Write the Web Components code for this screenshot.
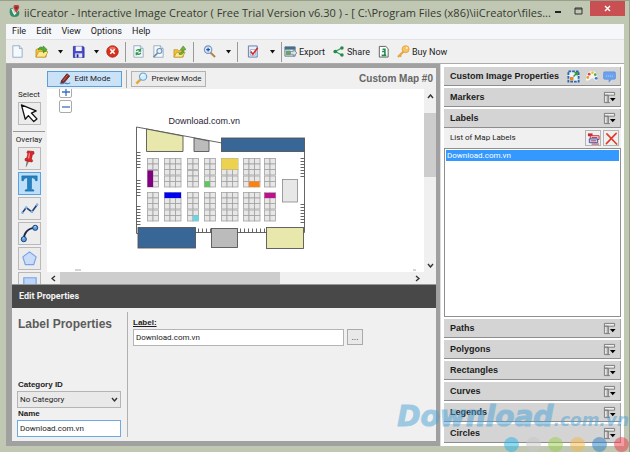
<!DOCTYPE html>
<html lang="en">
<head>
<meta charset="utf-8">
<title>iiCreator</title>
<style>
html,body{margin:0;height:100%;overflow:hidden}
body{font:9px/12px Roboto,"Liberation Sans",sans-serif;color:#1c1c1c;background:#c0c8b4}
</style>
</head>
<body>
<app-window></app-window>
<script>
const BASE = `<style>
*{box-sizing:border-box}
button,input,select{font:inherit;color:inherit;margin:0;padding:0;border:0;background:none}
svg{display:block;flex:none}
</style>`;
function define(name, html, setup) {
  const t = document.createElement('template');
  t.innerHTML = BASE + html;
  customElements.define(name, class extends HTMLElement {
    constructor() {
      super();
      this.attachShadow({mode: 'open'}).append(t.content.cloneNode(true));
    }
    connectedCallback() { if (setup) setup(this, this.shadowRoot); }
  });
}

const page = '<path d="M2 .8h7l3 3v9.4H2z" fill="#f4f9fe" stroke="#8ba4bd" stroke-width=".9"/><path d="M9 .8v3h3" fill="#d4e4f2" stroke="#8ba4bd" stroke-width=".8"/>';
const ICONS = {
  logo: ['0 0 12 14', '<path d="M1.5 3.5C0 7 .5 13 6 13s6-4 4.500-7L8.500 8C8.500 10 4.500 11 4 8S5 4 4 3z" fill="#2f8f68"/><path d="M3 4l3 6 4-5" stroke="#e8f4ec" fill="none" stroke-width="1.300"/><path d="M8 9L5.500 4a3 3 0 115 0z" fill="#bf3a38"/><circle cx="8" cy="3" r="1.200" fill="#6d2a2d"/>'],
  new: ['0 0 14 14', page],
  open: ['0 0 14 14', '<path d="M1 5l2-1h3l1 1h5v8H1z" fill="#f0c23c" stroke="#b38a1e" stroke-width=".7"/><path d="M1 13l3-6h10l-3 6z" fill="#ffe98a" stroke="#b38a1e" stroke-width=".7"/><path d="M3.500 5C4 2 7 1.500 9 3V1l4 4-4 3.500V6C7 4.500 5 4.500 3.500 5z" fill="#4fb037" stroke="#23781a" stroke-width=".6"/>'],
  save: ['0 0 14 14', '<path d="M1.500 1.500h10l1.500 1v11H1.500z" fill="#4c4cc8" stroke="#26268c" stroke-width=".8"/><path d="M4 1.500h6.500v5H4z" fill="#f2f4ff"/><path d="M3.500 9h7.500v4.500H3.500z" fill="#e2e6fa"/><path d="M5 10h2v3.500H5z" fill="#2a2a96"/>'],
  stop: ['0 0 14 14', '<circle cx="7" cy="7" r="6.200" fill="#d9301c" stroke="#a31c10" stroke-width=".8"/><path d="M3 4a5 5 0 018 0q-4 2-8 0" fill="#f28c70" opacity=".7"/><path d="M4.600 4.600l4.800 4.800m0-4.800L4.600 9.400" stroke="#fff" stroke-width="1.700"/>'],
  refresh: ['0 0 14 14', page + '<path d="M4.500 6.500c1-2 3.500-2 4.500-.500M9.200 4v2.500H7M9.500 8.500c-1 2-3.500 2-4.500.5M4.600 11V8.500H7" fill="none" stroke="#2c9a46" stroke-width="1.400"/>'],
  find: ['0 0 14 14', page + '<circle cx="8" cy="6.500" r="2.700" fill="#e2f1ff" stroke="#7590ad" stroke-width="1.200"/><path d="M6 8.800L1.500 13" stroke="#7089a5" stroke-width="1.700"/>'],
  folder: ['0 0 14 14', '<path d="M1 5h4l1 1h5v7H1z" fill="#f0c23c" stroke="#b38a1e" stroke-width=".7"/><path d="M1 13l3-5h9l-3 5z" fill="#ffe98a" stroke="#b38a1e" stroke-width=".7"/><path d="M6.500 9C9 9 10 7.500 10 5H8l3-4 3 4h-2c0 4-2 6-5.500 5z" fill="#72b834" stroke="#3d7a1d" stroke-width=".6"/>'],
  zoom: ['0 0 14 14', '<path d="M8 8l5 5" stroke="#b98346" stroke-width="2.200"/><circle cx="5.500" cy="5" r="4" fill="#d4ebff" stroke="#7797c0" stroke-width="1.200"/><path d="M3.500 5h4m-2-2v4" stroke="#2a4f9e" stroke-width="1.300"/>'],
  check: ['0 0 14 14', '<path d="M1.500 1h9.500v12H1.500z" fill="#e9f0fb" stroke="#5d79ad" stroke-width="1"/><path d="M3.500 5h5.500v6H3.500z" fill="#fff" stroke="#8a9abf" stroke-width=".8"/><path d="M4 7l2.300 3L11.500 3" fill="none" stroke="#d42a20" stroke-width="1.700"/>'],
  export: ['0 0 14 14', '<path d="M1 2h11v10H1z" fill="#e8f0f2" stroke="#4b6a7a" stroke-width=".9"/><path d="M1 2h11v3H1z" fill="#416f8c"/><path d="M2 6h5v5H2z" fill="#6f9f70"/><path d="M7 7h3V5l4 3.500-4 3.500v-2H7z" fill="#dce4ea" stroke="#5a7180" stroke-width=".7"/>'],
  share: ['0 0 14 14', '<path d="M11 3L3.500 7l7.500 4" fill="none" stroke="#2d9a57" stroke-width="1.200"/><circle cx="3.500" cy="7" r="2" fill="#228a4b"/><circle cx="10.700" cy="3.300" r="1.900" fill="#228a4b"/><circle cx="10.700" cy="10.700" r="1.900" fill="#228a4b"/>'],
  stats: ['0 0 14 14', '<path d="M2.500 1.500h7l2.500 2.500v9H2.500z" fill="#fff" stroke="#555e58" stroke-width="1"/><path d="M6 4.500h2.500v6.500M5 11.200h5M5.500 7h3" stroke="#228a4b" stroke-width="1.700" fill="none"/>'],
  key: ['0 0 14 14', '<path d="M7 7l-6 6m2-2l1.500 1.500" stroke="#e3a545" stroke-width="2.200"/><circle cx="9.300" cy="4.500" r="3.800" fill="#f7c262" stroke="#e09b34" stroke-width=".8"/><circle cx="10.500" cy="3.300" r="1.100" fill="#fff4dc"/>'],
  pencil: ['0 0 14 14', '<path d="M2.500 9.500l6-7.500 3 2.200-6 7.300-3.500 1z" fill="#8c2c22" stroke="#4c1812" stroke-width=".8"/><path d="M4.500 9.500l5-6.500" stroke="#d4685a"/><path d="M1 12c3 2 4-1 6 0s3 1 5-.5" stroke="#4f84c4" stroke-width="1.300" fill="none"/>'],
  preview: ['0 0 14 14', '<path d="M6 8L1.500 12.500" stroke="#e4a934" stroke-width="2.600"/><circle cx="8.700" cy="5" r="3.900" fill="#d3edff" stroke="#6aa1d2" stroke-width="1.200"/><path d="M6.500 4.500Q7.500 2.500 9.500 3" stroke="#fff" fill="none"/>'],
  cursor: ['0 0 20 20', '<path d="M1.500 1l4 15 3.300-3.800 5.700 6.300 3.300-2.800-5.800-6.200 5-2.200z" fill="#fff" stroke="#111" stroke-width="1.400" stroke-linejoin="round"/>'],
  pin: ['0 0 20 20', '<path d="M7.500 12l-1 6.500L9.500 12z" fill="#8a8a8a" stroke="#666" stroke-width=".6"/><path d="M8 2l6.500.7.3 2.300-1.800 1-1 4.500 1.300 1.500-.6 1.700-7.200-1.400-.2-2 2-1 1-4.300-1-1.300z" fill="#d8262a" stroke="#a3181c" stroke-width=".7"/><path d="M10 4.500l-1 5.500" stroke="#ff9187" stroke-width="1.300"/>'],
  text: ['0 0 20 20', '<path d="M2 2h16v5h-1.500Q16 4.200 13.500 4H12v11.500q0 1.200 2.500 1.300V18h-9v-1.200Q8 16.700 8 15.500V4H6.500Q4 4.200 3.500 7H2z" fill="#2583c4" stroke="#17639e" stroke-width=".7"/>'],
  line: ['0 0 20 20', '<path d="M2.500 14.500L6.500 9l6 4.500 5.500-7.500" fill="none" stroke="#263d70" stroke-width="1.700"/><g fill="#79b8ef"><circle cx="2.500" cy="14.500" r="1.400"/><circle cx="6.500" cy="9" r="1.400"/><circle cx="12.500" cy="13.500" r="1.400"/><circle cx="18" cy="6" r="1.400"/></g>'],
  curve: ['0 0 20 20', '<path d="M4 16C4 10 8 4 16 4" fill="none" stroke="#18244c" stroke-width="1.800"/><g fill="#5c9fdf" stroke="#173b72" stroke-width="1"><circle cx="4" cy="16" r="2.700"/><circle cx="16" cy="4" r="2.700"/></g><path d="M3 15.300q.7-1 1.500-.5M15 3.300q.7-1 1.500-.5" stroke="#d9efff" fill="none"/>'],
  polygon: ['0 0 20 20', '<path d="M10 3l7 5.300-2.600 8.200H5.600L3 8.300z" fill="#c9dcfa" stroke="#7aa2e4" stroke-width="1.200"/>'],
  rect: ['0 0 20 20', '<path d="M4 4h13v12H4z" fill="#bcd5fa" stroke="#7aa2e4" stroke-width="1.200"/>'],
  grid: ['0 0 14 14', '<path d="M1.500 1.500h11v3h-11zM1.500 4.500h4v8h-4zM5.500 4.500v8h2" fill="#eee" stroke="#777" stroke-width="1"/><path d="M3.500 5v7" stroke="#999" stroke-dasharray="1 1"/><path d="M7.500 7.500h6L10.500 11z" fill="#000"/>'],
  resize: ['0 0 14 14', '<path d="M1.500 1.500h11v11h-11z" fill="#eaf4ff" stroke="#2a66ad" stroke-width="2" stroke-dasharray="3 1"/><path d="M3 7.500h4v4H3z" fill="#e88a2c"/><path d="M7 7l3.500-3.500M8 3h3v3" stroke="#3a9a42" stroke-width="1.600" fill="none"/>'],
  palette: ['0 0 14 14', '<path d="M1 11C1 4 4 1 8 1s6 4 5 10c-2 2-3-2-5-2s-4 4-7 2z" fill="#f7f5f2"/><g><circle cx="3" cy="8" r="1.500" fill="#ea9a2a"/><circle cx="4.500" cy="4.500" r="1.500" fill="#d84a34"/><circle cx="8" cy="2.800" r="1.400" fill="#e2c83a"/><circle cx="11" cy="5" r="1.400" fill="#50a84c"/><circle cx="12" cy="9" r="1.500" fill="#3d78d0"/></g>'],
  chat: ['0 0 14 14', '<path d="M2 2h10q1.500 0 1.500 1.500v5q0 1.500-1.500 1.500H9l-2.500 3V10H2Q.5 10 .5 8.500v-5Q.5 2 2 2z" fill="#6ba1ec" stroke="#5388da" stroke-width=".6"/><path d="M3.500 6.500h7" stroke="#c3dbfa" stroke-dasharray="1 1"/>'],
  rename: ['0 0 14 14', '<path d="M1 1.500h5v3H1z" fill="#c82a34"/><path d="M3.500 4h9.500v4H3.500z" fill="#f4dce4" stroke="#ba2b3d"/><path d="M2.500 7.500h9v4h-9z" fill="#dae4fb" stroke="#394a9a"/><path d="M5 6h6M4 9.500h6M5 13h8" stroke="#b92b3b"/>'],
  remove: ['0 0 14 14', '<path d="M2 2l10.500 11M12 1.500L1.500 12.500" stroke="#e03a28" stroke-width="1.700" stroke-linecap="round"/>'],
};
const icon = (n, s) => `<svg width="${s}" height="${s}" viewBox="${ICONS[n][0]}" aria-hidden="true">${ICONS[n][1]}</svg>`;

define('app-icon', `<style>:host{display:block;flex:none}</style><span></span>`, (h, r) => {
  r.querySelector('span').innerHTML = icon(h.getAttribute('name'), h.getAttribute('size') || 12);
});

define('title-bar', `<style>
:host{display:flex;align-items:flex-start;height:23px;padding:0 0 0 8px;font:11px/23px "Open Sans","Noto Sans",sans-serif;color:#37392f}
app-icon{padding-top:4px;margin-right:3px}
h1{font:inherit;margin:0;flex:1;min-width:0;white-space:nowrap}
.b{display:flex}
button{width:20px;height:19px;display:grid;place-items:center}
.close{background:#c84f52;width:35px;height:15px;margin:0 0 0 2px}
</style>
<app-icon name="logo" size="13"></app-icon><h1><slot></slot></h1>
<div class="b"><button aria-label="Minimize"><svg width="8" height="8"><path d="M1 5h6" stroke="#222" stroke-width="2"/></svg></button>
<button aria-label="Maximize"><svg width="9" height="8"><path d="M1 1h7v6H1zM1 2h7" fill="none" stroke="#333"/></svg></button>
<button class="close" aria-label="Close"><svg width="7" height="7"><path d="M1 1l5 5m0-5L1 6" stroke="#fff" stroke-width="1.400"/></svg></button></div>`);

define('menu-bar', `<style>
:host{display:block;background:#f6f7fa;border-bottom:1px solid #e2e2e4}
nav{display:flex;gap:10px;padding:0 6px;height:15px}
button{line-height:15px}
</style><nav><button>File</button><button>Edit</button><button>View</button><button>Options</button><button>Help</button></nav>`);

define('tool-item', `<style>
:host{display:block;flex:none;width:20px}
:host([w=m]){width:22px}:host([w=l]){width:24px}:host([w=xl]){width:26px}:host([text]){width:auto}
button{width:100%;height:22px;display:flex;align-items:center;justify-content:center;gap:2px;white-space:nowrap}
</style><button><span></span><slot></slot></button>`, (h, r) => {
  r.querySelector('span').innerHTML = icon(h.getAttribute('icon'), 13);
  r.querySelector('button').setAttribute('aria-label', h.textContent || h.getAttribute('icon'));
});
define('tool-caret', `<style>:host{display:block;flex:none;width:12px}button{width:12px;height:22px;display:grid;place-items:center}</style>
<button aria-label="More"><svg width="5" height="4"><path d="M0 0h5L2.500 3.500z" fill="#111"/></svg></button>`);
define('tool-sep', `<style>:host{display:block;flex:none;width:6px;height:20px}i{display:block;width:1px;height:100%;margin:auto;background:#9a9a9a}</style><i></i>`);

define('tool-bar', `<style>:host{display:flex;align-items:center;height:23px;background:#f0f0f0}
.t{display:flex;gap:7px}</style>
<tool-item w="m" icon="new"></tool-item><tool-item w="xl" icon="open"></tool-item><tool-caret></tool-caret>
<tool-item w="l" icon="save"></tool-item><tool-caret></tool-caret><tool-item icon="stop"></tool-item><tool-sep></tool-sep>
<tool-item icon="refresh"></tool-item><tool-item icon="find"></tool-item><tool-item w="m" icon="folder"></tool-item><tool-sep></tool-sep>
<tool-item w="xl" icon="zoom"></tool-item><tool-caret></tool-caret><tool-sep></tool-sep>
<tool-item w="xl" icon="check"></tool-item><tool-caret></tool-caret><tool-sep></tool-sep>
<div class="t"><tool-item text icon="export">Export</tool-item><tool-item text icon="share">Share</tool-item><tool-item text icon="stats"></tool-item><tool-item text icon="key">Buy Now</tool-item></div>`);

define('mode-bar', `<style>
:host{display:flex;align-items:center;height:21px;padding:0 3px 0 35px;background:#f0f0f0}
button{width:75px;height:16px;font-size:8px;border:1px solid #b2b2b2;background:#ebebeb;display:flex;align-items:center;justify-content:center;gap:3px;white-space:nowrap}
button.on{background:#c9e2f8;border-color:#5b9fd8}
i{width:1px;height:18px;margin:0 4px;background:#aaa}
h2{margin:0 0 0 auto;font:bold 10px/14px "Liberation Sans",Arial,sans-serif;color:#666}
</style><button class="on" aria-pressed="true">${icon('pencil', 13)}Edit Mode</button><i></i><button>${icon('preview', 13)}Preview Mode</button><h2>Custom Map #0</h2>`);

define('tool-palette', `<style>
:host{display:flex;flex-direction:column;align-items:center;gap:2px;width:35px;padding:1px 1px 0 0;background:#f0f0f0;overflow:hidden;flex:none;contain:size;font-size:8px;line-height:10px}
button{width:23px;height:23px;flex:none;display:grid;place-items:center;border:1px solid #b9b9b9;background:#ececec}
button.on{background:#bddffa;border-color:#5aa3e0}
hr{width:32px;margin:4px 0 1px;border:0;border-top:1px solid #999}
span{flex:none}
</style><span>Select</span><button aria-label="Select">${icon('cursor', 19)}</button><hr><span>Overlay</span>
${[['pin','Marker'],['text','Label'],['line','Path'],['curve','Curve'],['polygon','Polygon'],['rect','Rectangle']].map(([n, l]) => `<button aria-label="${l}"${n === 'text' ? ' class="on"' : ''}>${icon(n, 19)}</button>`).join('')}`);

/* Floor plan of the exhibition hall, in canvas coordinates. */
function floorPlan() {
  const cols = [[147.5,2],[164.5,3],[187.5,2],[204.5,2],[221.5,3],[243.5,3],[264.5,2]];
  const c = 5.5;
  let s = '<g fill="#e7e7e7" stroke="#a2a2a2" stroke-width=".8">';
  cols.forEach(([x, n], i) => {
    const topRows = (i === 0 || i === 2) ? [158.5,164,170.500,176,181.500] : [158.5,164,169.500,176,181.500];
    const low = [192.500,198,203.500,210,215.500];
    [...topRows, ...low].forEach(y => { for (let k = 0; k < n; k++) s += `<rect x="${x + k * c}" y="${y}" width="${c}" height="${c}"/>`; });
  });
  s += '<rect x="282.500" y="179.500" width="15" height="22.500" stroke="#888"/></g>';
  [[147.5,170.5,5.5,16.5,'#800080'],[204.5,181.5,5.5,5.5,'#62c462'],[221.5,158.5,16.5,11,'#ecd24e'],[249,181.5,10.5,5.5,'#fb8110'],
   [164.5,192.5,16.5,5.5,'#0000f0'],[193,215.5,5.5,5.5,'#6ad4e4'],[264.5,193,11,5,'#c0108c']]
    .forEach(([x, y, w, h, f]) => s += `<rect x="${x}" y="${y}" width="${w}" height="${h}" fill="${f}"/>`);
  let t = '';
  [[152,168],[180,197],[206,224]].forEach(([a, b]) => { for (let y = a; y <= b; y += 3) t += `M136.500 ${y + .5}h4`; });
  [[158,176],[204,222]].forEach(([a, b]) => { for (let y = a; y <= b; y += 3) t += `M304.500 ${y + .5}h-4`; });
  [[198,210],[240,264]].forEach(([a, b]) => { for (let x = a; x <= b; x += 4) t += `M${x + .5} 232.500v-4`; });
  s += `<path d="${t}M222 143L136.500 127v106.500H138M195 232.500h109.500V151" fill="none" stroke="#555" stroke-width=".9"/>
  <g stroke="#555" stroke-width=".9"><path d="M146.500 129l36.500 7v15.500h-36.500z" fill="#e8e8ac"/><path d="M194 138l15 3v10.500h-15z" fill="#bbb"/>
  <rect x="221.500" y="138" width="83" height="13.500" fill="#386797"/><rect x="138" y="227.500" width="57.500" height="20.500" fill="#386797"/>
  <rect x="211.500" y="228.500" width="26" height="19" fill="#bbb"/><rect x="266.500" y="227.500" width="37" height="21" fill="#e8e8ac"/></g>`;
  return s;
}
define('map-canvas', `<style>
:host{display:grid;grid-template:minmax(0,1fr) 12px/minmax(0,1fr) 12px;flex:1;min-width:0;background:#f0f0f0}
.v{position:relative;background:#fff;overflow:hidden}
.z{position:absolute;left:12px;top:-4px;display:grid;gap:2px}
.z button{width:13px;height:13px;border:1px solid #aaa;border-radius:2px;background:#fff;display:grid;place-items:center}
.sb{display:flex;flex-direction:column;align-items:center}
.sb b{flex:0 0 64px;width:100%;background:#cdcdcd}
.sb i{flex:0 0 24px;display:grid;place-items:start center;padding-top:5px}
.sb i:last-child{margin-top:auto;flex-basis:14px}
.hb{display:flex;align-items:center}
.hb i{flex:0 0 13px;display:grid;place-items:center}
.hb b{flex:0 1 220px;height:100%;background:#cdcdcd}
.hb i:last-child{margin-left:auto}
</style>
<div class="v"><svg width="376" height="183" viewBox="47 89 376 183" role="img" aria-label="Floor plan">${floorPlan()}
<text x="168.500" y="124" font-family="Liberation Sans,Arial,sans-serif" font-size="9" fill="#2c2236">Download.com.vn</text>
<path d="M75 270h6M413 270h3" stroke="#aaa"/></svg>
<div class="z"><button aria-label="Zoom in"><svg width="8" height="8"><path d="M0 4h8M4 0v8" stroke="#3d6fc4" stroke-width="1.300"/></svg></button><button aria-label="Zoom out"><svg width="8" height="8"><path d="M0 4h8" stroke="#3d6fc4" stroke-width="1.300"/></svg></button></div></div>
<div class="sb"><i><svg width="7" height="5"><path d="M1 4l2.500-3L6 4" fill="none" stroke="#333" stroke-width="1.400"/></svg></i><b></b><i><svg width="7" height="5"><path d="M1 1l2.500 3L6 1" fill="none" stroke="#333" stroke-width="1.400"/></svg></i></div>
<div class="hb"><i><svg width="5" height="7"><path d="M4 1L1 3.500 4 6" fill="none" stroke="#333" stroke-width="1.400"/></svg></i><b></b><i><svg width="5" height="7"><path d="M1 1l3 2.500L1 6" fill="none" stroke="#333" stroke-width="1.400"/></svg></i></div>`);

define('edit-properties', `<style>
:host{display:block;background:#f0f0f0}
header{background:#484848;border-top:1px solid #999;height:24px;padding-left:7px;font:bold 9px/22px Roboto,"Noto Sans",sans-serif;color:#f2f2f2}
.g{display:grid;grid-template-columns:116px minmax(0,1fr);height:133px;padding:4px 0}
.l{display:flex;flex-direction:column;padding:0 6px 0 5px;border-right:1px solid #b0b0b0}
h2{margin:5px 0 auto 1px;font:bold 12px/14px "Liberation Sans",Arial,sans-serif;color:#5c5c5c}
label{font:bold 8px/12px "Liberation Sans",Arial,sans-serif}
.l label{padding-left:1px}
select,input{width:100%;height:17px;padding:0 2px;font-size:8px;background:#fff;border:1px solid #b4b4b4;border-radius:0;outline:0}
.s{position:relative}
select{appearance:none;background:#e9e9e9;display:block}
.s svg{position:absolute;right:3px;top:6px;pointer-events:none}
.l input{border-color:#6fa9e2}
.r{padding:4px 92px 0 5px}
.r label{text-decoration:underline}
.f{display:flex;gap:3px;width:calc(100% + 19px)}
.f button{flex:0 0 16px;height:16px;border:1px solid #aaa;background:#e9e9e9;line-height:12px}
</style><header>Edit Properties</header><div class="g"><div class="l"><h2>Label Properties</h2><label for="c">Category ID</label>
<div class="s"><select id="c"><option>No Category</option></select><svg width="7" height="6"><path d="M1 1l2.500 3L6 1" fill="none" stroke="#333" stroke-width="1.400"/></svg></div>
<label for="n">Name</label><input id="n" value="Download.com.vn"></div>
<div class="r"><label for="t">Label:</label><div class="f"><input id="t" value="Download.com.vn"><button aria-label="Browse">...</button></div></div></div>`, (h, r) => {
  const name = r.getElementById('n');
  requestAnimationFrame(() => { name.focus(); name.setSelectionRange(name.value.length, name.value.length); });
});

define('panel-head', `<style>
:host{display:flex;align-items:center;height:19px;flex:none;padding:0 4px 0 6px;background:#d4d4d4;border-right:1px solid #a4a4a4;border-bottom:1px solid #8d8d8d;font:bold 9px/18px "Liberation Sans",Arial,sans-serif}
h3{font:inherit;margin:0;flex:1;white-space:nowrap}
div{display:flex;gap:5px}button{display:block}
</style><h3><slot></slot></h3><div></div>`, (h, r) => {
  r.querySelector('div').innerHTML = (h.getAttribute('icons') || 'grid').split(' ').map(n => `<button aria-label="${n}">${icon(n, 13)}</button>`).join('');
});

define('side-panel', `<style>
:host{display:flex;flex-direction:column;gap:2px;width:184px;flex:none;padding:3px;background:#fff;border-left:1px solid #ddd}
.x{display:flex;flex-direction:column;flex:1;min-height:0}
.bar{display:flex;align-items:center;gap:2px;background:#f0f0f0;height:20px;padding:0 2px 0 6px;font-size:8px}
.bar span{flex:1}
.bar button{width:16px;height:16px;border:1px solid #b4b4b4;display:grid;place-items:center}
ul{list-style:none;margin:0;padding:1px;flex:1;border:1px solid #8f8f8f;background:#fff}
li{background:#3399ff;color:#fff;padding-left:1px;font-size:8px;line-height:11px}
</style>
<panel-head icons="resize palette chat">Custom Image Properties</panel-head>
<panel-head>Markers</panel-head>
<div class="x"><panel-head>Labels</panel-head>
<div class="bar"><span id="ll">List of Map Labels</span><button aria-label="Rename label">${icon('rename', 13)}</button><button aria-label="Delete label">${icon('remove', 13)}</button></div>
<ul role="listbox" aria-labelledby="ll"><li role="option" aria-selected="true">Download.com.vn</li></ul></div>
<panel-head>Paths</panel-head><panel-head>Polygons</panel-head><panel-head>Rectangles</panel-head><panel-head>Curves</panel-head><panel-head>Legends</panel-head><panel-head>Circles</panel-head>`);

define('site-mark', `<style>
:host{position:absolute;right:0;bottom:0;display:block;pointer-events:none;white-space:nowrap;color:#4ba2d6;opacity:.5}
p{margin:0;font:italic bold 28px/34px "DejaVu Sans",sans-serif;-webkit-text-stroke:1px #4ba2d6}
small{font-size:17px;-webkit-text-stroke:0}
div{display:flex;gap:7px;justify-content:flex-end;height:15px}
i{width:15px;height:15px;border-radius:50%}
</style><p>Download<small>.com.vn</small></p><div>${['#26b4e8','#c8c8c8','#9ccf4e','#f6b848','#2a80c8','#ec3c48'].map(c => `<i style="background:${c}"></i>`).join('')}</div>`);

define('app-window', `<style>
:host{display:flex;flex-direction:column;position:relative;min-height:100vh;box-sizing:border-box;background:#c0c8b4;border-top:1px solid #98a08c;border-right:1px solid #98a08c;overflow:hidden}
title-bar{margin-right:4px}
main{flex:1;display:flex;flex-direction:column;margin:0 5px 6px 6px;min-height:0}
.w{flex:1;display:flex;min-height:0;border-top:1px solid #aaa}
.e{flex:1;min-width:0;display:flex;flex-direction:column;padding:4px 4px 5px 6px;background:#a0a0a0}
.c{flex:1;display:flex;min-height:0;background:#f0f0f0}
site-mark{z-index:2}
</style><title-bar>iiCreator - Interactive Image Creator ( Free Trial Version v6.30 ) - [ C:\\Program Files (x86)\\iiCreator\\files...</title-bar>
<main><menu-bar></menu-bar><tool-bar></tool-bar><div class="w"><div class="e"><mode-bar></mode-bar><div class="c"><tool-palette></tool-palette><map-canvas></map-canvas></div><edit-properties></edit-properties></div><side-panel></side-panel></div></main><site-mark></site-mark>`);
</script>
</body>
</html>
